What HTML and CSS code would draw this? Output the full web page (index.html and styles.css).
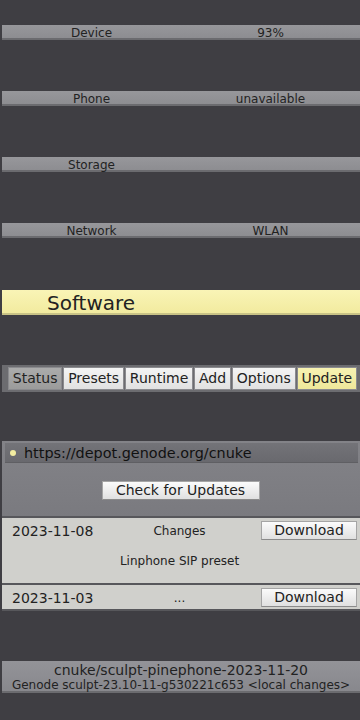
FILE: index.html
```html
<!DOCTYPE html>
<html lang="en">
<head>
    <meta charset="UTF-8">
    <meta name="viewport" content="width=device-width, initial-scale=1.0">
    <title>Sculpt</title>
    <link rel="stylesheet" href="styles.css">
</head>
<body>

<div class="status-list">
    <div class="bar"><span>Device</span><span>93%</span></div>
    <div class="bar"><span>Phone</span><span>unavailable</span></div>
    <div class="bar"><span>Storage</span><span></span></div>
    <div class="bar"><span>Network</span><span>WLAN</span></div>
</div>

<div class="section-title">Software</div>

<div class="tabs">
    <div class="tab selected">Status</div>
    <div class="tab">Presets</div>
    <div class="tab">Runtime</div>
    <div class="tab">Add</div>
    <div class="tab">Options</div>
    <div class="tab active">Update</div>
</div>

<div class="update-panel">
    <div class="depot-url"><span class="dot"></span>https://depot.genode.org/cnuke</div>
    <div class="check-row">
        <button class="button check-button" type="button">Check for Updates</button>
    </div>
</div>

<div class="releases">
    <div class="release">
        <span class="release-date">2023-11-08</span>
        <span class="release-info">Changes</span>
        <button class="button download" type="button">Download</button>
        <div class="release-notes">Linphone SIP preset</div>
    </div>
    <div class="release">
        <span class="release-date">2023-11-03</span>
        <span class="release-info">...</span>
        <button class="button download" type="button">Download</button>
    </div>
</div>

<div class="version">
    <div class="version-name">cnuke/sculpt-pinephone-2023-11-20</div>
    <div class="version-build">Genode sculpt-23.10-11-g530221c653 &lt;local changes&gt;</div>
</div>

</body>
</html>
```

FILE: styles.css
```css
body {
    margin: 0;
    background-color: #3f3e43;
    font-family: 'DejaVu Sans', 'Liberation Sans', sans-serif;
    color: #222;
}
.status-list {
    display: flex;
    flex-direction: column;
    gap: 51px;
    padding-top: 25px;
}
.bar {
    display: grid;
    grid-template-columns: 1fr 1fr;
    margin-left: 2px;
    height: 15px;
    box-sizing: border-box;
    background: linear-gradient(#97979b, #8d8d91);
    border-bottom: 2px solid #6b6b6f;
    font-size: 12px;
    line-height: 16px;
    text-align: center;
}
.section-title {
    margin: 52px 0 0 2px;
    height: 25px;
    box-sizing: border-box;
    padding-left: 45px;
    background: linear-gradient(#f9f4b6, #f2eb9f);
    border-bottom: 2px solid #c9c386;
    font-size: 20px;
    line-height: 27px;
}
.tabs {
    display: flex;
    gap: 1px;
    margin: 50px 0 0 2px;
    padding: 2px 3px 2px 6px;
    background-color: #6c6c70;
}
.tab {
    flex: 1 1 auto;
    height: 23px;
    box-sizing: border-box;
    padding: 0 3px;
    border: 1px solid #8a8a8e;
    background: linear-gradient(#f4f4f4, #e1e1e1);
    font-size: 14px;
    line-height: 21px;
    text-align: center;
}
.tab.selected {
    background: linear-gradient(#ababab, #9b9b9b);
}
.tab.active {
    background: linear-gradient(#f8f3b2, #eee79a);
}
.update-panel {
    margin: 49px 0 0 2px;
    height: 75px;
    box-sizing: border-box;
    padding: 2px 2px 0 3px;
    background: linear-gradient(#838388, #7a7a7f);
}
.depot-url {
    display: flex;
    align-items: center;
    gap: 8px;
    height: 19px;
    padding-left: 5px;
    background: linear-gradient(#737378, #69696e);
    border-bottom: 1px solid #5f5f63;
    font-size: 14.4px;
    color: #111;
}
.dot {
    width: 6px;
    height: 6px;
    border-radius: 50%;
    background-color: #f2eca0;
}
.check-row {
    display: flex;
    justify-content: center;
    padding-top: 18px;
    padding-right: 2px;
}
.button {
    height: 19px;
    padding: 0;
    border: 1px solid #a5a5a5;
    border-bottom-color: #8b8b8b;
    background: linear-gradient(#fbfbfb, #e0e0e0);
    font-family: 'DejaVu Sans', 'Liberation Sans', sans-serif;
    font-size: 14px;
    line-height: 17px;
    color: #222;
}
.check-button {
    width: 158px;
}
.releases {
    display: flex;
    flex-direction: column;
    gap: 2px;
    margin-left: 2px;
    padding: 2px 0;
    background-color: #57575b;
}
.release {
    display: grid;
    grid-template-columns: 1fr 1fr 1fr;
    align-items: center;
    padding: 3px 3px 2px 0;
    background-color: #d0d0cc;
    font-size: 14px;
}
.release-date {
    padding-left: 10px;
}
.release-info {
    font-size: 12px;
    text-align: center;
}
.download {
    justify-self: end;
    width: 96px;
}
.release-notes {
    grid-column: 1 / 4;
    padding: 14px 0 13px;
    font-size: 12px;
    text-align: center;
}
.version {
    margin: 50px 0 0 2px;
    height: 32px;
    box-sizing: border-box;
    padding-top: 1px;
    background: linear-gradient(#939398, #88888d);
    border-bottom: 2px solid #6b6b6f;
    text-align: center;
}
.version-name {
    font-size: 14px;
    line-height: 16px;
}
.version-build {
    font-size: 12px;
    line-height: 14px;
}
```
